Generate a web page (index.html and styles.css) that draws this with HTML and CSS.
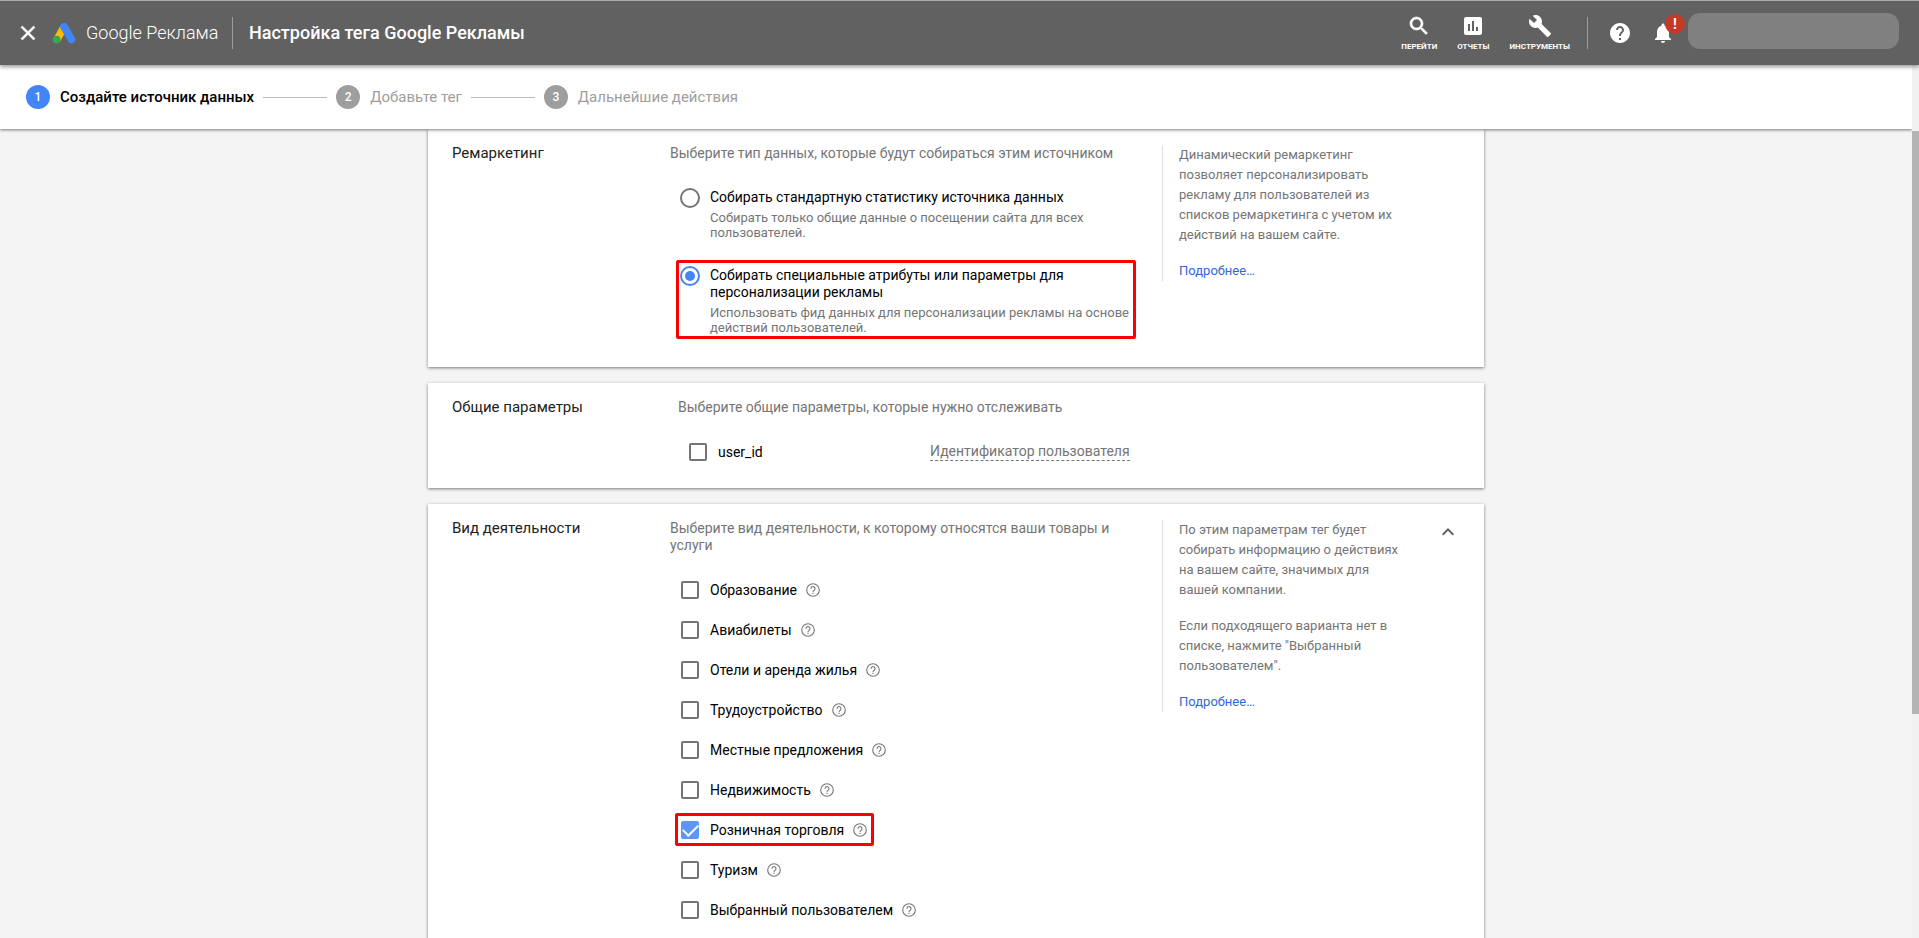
FILE: index.html
```html
<!DOCTYPE html>
<html lang="ru">
<head>
<meta charset="utf-8">
<title>Настройка тега Google Рекламы</title>
<link rel="stylesheet" href="styles.css">
</head>
<body>
<svg class="sprite" aria-hidden="true">
  <symbol id="help-outline" viewBox="0 0 16 16">
    <circle cx="8" cy="8" r="6.300" fill="none" stroke="currentColor" stroke-width="1.100"/>
    <path d="M6 6.700a2 2 0 1 1 3.300 1.400C8.600 8.700 8 9 8 9.900" fill="none" stroke="currentColor" stroke-width="1.100"/>
    <path d="M7.400 10.700h1.200v1.200H7.400z" fill="currentColor"/>
  </symbol>
</svg>

<header class="topbar">
  <button class="icon-btn" aria-label="Закрыть">
    <svg class="icon" viewBox="0 0 24 24"><path d="M19 6.410L17.590 5 12 10.590 6.410 5 5 6.410 10.590 12 5 17.590 6.410 19 12 13.410 17.590 19 19 17.590 13.410 12z" stroke="currentColor" stroke-width=".6"/></svg>
  </button>
  <div class="brand">
    <svg class="brand-logo" viewBox="0 0 24 22" aria-hidden="true">
      <path d="M5 17.500L12 5" stroke="#fbbc04" stroke-width="7.500" fill="none"/>
      <path d="M12 4.800L19.500 17.500" stroke="#4285f4" stroke-width="7.600" stroke-linecap="round" fill="none"/>
      <circle cx="4.600" cy="17.600" r="3.900" fill="#34a853"/>
    </svg>
    <span class="brand-name">Google Реклама</span>
  </div>
  <span class="divider"></span>
  <h1 class="page-title">Настройка тега Google Рекламы</h1>
  <nav class="tools">
    <button class="tool">
      <svg class="icon" viewBox="0 0 24 24"><path d="M15.500 14h-.79l-.28-.27C15.410 12.590 16 11.110 16 9.500 16 5.910 13.090 3 9.500 3S3 5.910 3 9.500 5.910 16 9.500 16c1.610 0 3.090-.59 4.230-1.570l.27.28v.79l5 4.990L20.490 19l-4.990-5zm-6 0C7.010 14 5 11.990 5 9.500S7.010 5 9.500 5 14 7.010 14 9.500 11.990 14 9.500 14z" stroke="currentColor" stroke-width=".6"/></svg>
      <span>ПЕРЕЙТИ</span>
    </button>
    <button class="tool">
      <svg class="icon" viewBox="0 0 24 24"><path d="M19 3H5c-1.100 0-2 .9-2 2v14c0 1.100.9 2 2 2h14c1.100 0 2-.9 2-2V5c0-1.100-.9-2-2-2zM9 17H7v-7h2v7zm4 0h-2V7h2v10zm4 0h-2v-4h2v4z"/></svg>
      <span>ОТЧЕТЫ</span>
    </button>
    <button class="tool">
      <svg class="icon" viewBox="0 0 24 24"><path d="M22.700 19l-9.100-9.100c.9-2.300.4-5-1.500-6.900-2-2-5-2.400-7.400-1.300L9 6 6 9 1.600 4.700C.4 7.100.9 10.100 2.900 12.100c1.900 1.900 4.600 2.400 6.900 1.500l9.100 9.100c.4.4 1 .4 1.400 0l2.300-2.300c.5-.4.5-1.100.1-1.400z"/></svg>
      <span>ИНСТРУМЕНТЫ</span>
    </button>
  </nav>
  <span class="divider"></span>
  <div class="status">
    <button class="icon-btn" aria-label="Справка">
      <svg class="icon" viewBox="0 0 24 24"><path d="M12 2C6.480 2 2 6.480 2 12s4.480 10 10 10 10-4.480 10-10S17.520 2 12 2zm1 17h-2v-2h2v2zm2.070-7.750l-.9.920C13.450 12.900 13 13.500 13 15h-2v-.5c0-1.100.45-2.100 1.170-2.830l1.240-1.260c.37-.36.59-.86.59-1.410 0-1.100-.9-2-2-2s-2 .9-2 2H8c0-2.210 1.790-4 4-4s4 1.790 4 4c0 .88-.36 1.680-.93 2.250z"/></svg>
    </button>
    <button class="icon-btn bell" aria-label="Уведомления">
      <svg class="icon" viewBox="0 0 24 24"><path d="M12 22c1.100 0 2-.9 2-2h-4c0 1.100.89 2 2 2zm6-6v-5c0-3.070-1.640-5.640-4.500-6.320V4c0-.83-.67-1.500-1.500-1.500s-1.500.67-1.500 1.500v.68C7.630 5.360 6 7.920 6 11v5l-2 2v1h16v-1l-2-2z"/></svg>
      <span class="badge">!</span>
    </button>
  </div>
  <div class="account"></div>
</header>

<div class="workspace">
  <div class="content">
    <ol class="steps">
      <li class="step step-active"><span class="step-num">1</span>Создайте источник данных</li>
      <li class="step"><span class="step-num">2</span>Добавьте тег</li>
      <li class="step"><span class="step-num">3</span>Дальнейшие действия</li>
    </ol>

    <main class="cards">
      <section class="card">
        <h2 class="card-title">Ремаркетинг</h2>
        <div class="card-body">
          <p class="lead">Выберите тип данных, которые будут собираться этим источником</p>
          <div class="options">
            <label class="option">
              <input class="radio" type="radio" name="mode">
              <span class="option-text">Собирать стандартную статистику источника данных
                <span class="hint">Собирать только общие данные о посещении сайта для всех пользователей.</span></span>
            </label>
            <label class="option marked">
              <input class="radio" type="radio" name="mode" checked>
              <span class="option-text">Собирать специальные атрибуты или параметры для персонализации рекламы
                <span class="hint">Использовать фид данных для персонализации рекламы на основе действий пользователей.</span></span>
            </label>
          </div>
        </div>
        <aside class="side">
          <p>Динамический ремаркетинг позволяет персонализировать рекламу для пользователей из списков ремаркетинга с учетом их действий на вашем сайте.</p>
          <a href="#">Подробнее…</a>
        </aside>
      </section>

      <section class="card">
        <h2 class="card-title">Общие параметры</h2>
        <div class="card-body param-body">
          <p class="lead">Выберите общие параметры, которые нужно отслеживать</p>
          <div class="param">
            <label class="param-label"><input class="check" type="checkbox">user_id</label>
            <span class="term">Идентификатор пользователя</span>
          </div>
        </div>
      </section>

      <section class="card">
        <h2 class="card-title">Вид деятельности</h2>
        <div class="card-body">
          <p class="lead">Выберите вид деятельности, к которому относятся ваши товары и услуги</p>
          <div class="activities">
            <label class="activity"><input class="check" type="checkbox">Образование<svg class="help"><use href="#help-outline"/></svg></label>
            <label class="activity"><input class="check" type="checkbox">Авиабилеты<svg class="help"><use href="#help-outline"/></svg></label>
            <label class="activity"><input class="check" type="checkbox">Отели и аренда жилья<svg class="help"><use href="#help-outline"/></svg></label>
            <label class="activity"><input class="check" type="checkbox">Трудоустройство<svg class="help"><use href="#help-outline"/></svg></label>
            <label class="activity"><input class="check" type="checkbox">Местные предложения<svg class="help"><use href="#help-outline"/></svg></label>
            <label class="activity"><input class="check" type="checkbox">Недвижимость<svg class="help"><use href="#help-outline"/></svg></label>
            <label class="activity marked"><input class="check" type="checkbox" checked>Розничная торговля<svg class="help"><use href="#help-outline"/></svg></label>
            <label class="activity"><input class="check" type="checkbox">Туризм<svg class="help"><use href="#help-outline"/></svg></label>
            <label class="activity"><input class="check" type="checkbox">Выбранный пользователем<svg class="help"><use href="#help-outline"/></svg></label>
          </div>
        </div>
        <aside class="side">
          <p>По этим параметрам тег будет собирать информацию о действиях на вашем сайте, значимых для вашей компании.</p>
          <p>Если подходящего варианта нет в списке, нажмите "Выбранный пользователем".</p>
          <a href="#">Подробнее…</a>
        </aside>
        <button class="icon-btn collapse" aria-label="Свернуть">
          <svg class="icon" viewBox="0 0 24 24"><path d="M12 8l-6 6 1.410 1.410L12 10.830l4.590 4.580L18 14z"/></svg>
        </button>
      </section>
    </main>
  </div>
  <div class="scrollbar" aria-hidden="true"><span class="thumb"></span></div>
</div>
</body>
</html>
```
FILE: styles.css
```css
* {
  box-sizing: border-box;
}

body {
  margin: 0;
  height: 100vh;
  display: flex;
  flex-direction: column;
  overflow: hidden;
  background: #f4f4f4;
  color: #000;
  font: 14px/17px Roboto, "Noto Sans", sans-serif;
}

h1, h2, p, ol {
  margin: 0;
  padding: 0;
}

button {
  border: 0;
  padding: 0;
  background: none;
  color: inherit;
  font: inherit;
}

.sprite {
  display: none;
}

.icon {
  display: block;
  width: 24px;
  height: 24px;
  fill: currentColor;
}

/* Top bar */

.topbar {
  position: relative;
  z-index: 2;
  display: flex;
  align-items: center;
  flex: none;
  height: 65px;
  padding: 0 20px 0 16px;
  border-top: 1px solid #aaa;
  background: #616161;
  box-shadow: 0 2px 4px rgba(0, 0, 0, .4);
  color: #fff;
}

.icon-btn {
  width: 24px;
  height: 24px;
}

.brand {
  display: flex;
  align-items: center;
  gap: 10px;
  width: 180px;
  margin: 0 0 0 12px;
}

.brand-logo {
  width: 24px;
  height: 22px;
}

.brand-name {
  font-size: 18px;
  line-height: 24px;
  font-weight: 300;
  white-space: nowrap;
}

.divider {
  width: 1px;
  height: 32px;
  background: #9e9e9e;
}

.page-title {
  margin: 0 auto 0 16px;
  font-size: 18px;
  line-height: 24px;
  font-weight: 500;
}

.tools {
  display: flex;
  gap: 20px;
  margin-right: 17px;
}

.tool {
  display: flex;
  flex-direction: column;
  align-items: center;
  gap: 3px;
  font-size: 8px;
  line-height: 12px;
  font-weight: 700;
}

.status {
  display: flex;
  gap: 19px;
  margin: 0 13px 0 20px;
}

.bell {
  position: relative;
}

.badge {
  position: absolute;
  top: -7px;
  left: 14px;
  width: 20px;
  height: 20px;
  border-radius: 50%;
  background: #c53929;
  font-size: 14px;
  line-height: 20px;
  font-weight: 700;
}

.account {
  width: 211px;
  height: 36px;
  margin-bottom: 4px;
  border-radius: 12px;
  background: #808080;
}

/* Work area */

.workspace {
  display: flex;
  flex: 1;
  min-height: 0;
}

.content {
  flex: 1;
  min-width: 0;
  overflow: hidden;
}

.scrollbar {
  display: grid;
  grid-template-rows: 66fr 583fr 224fr;
  width: 7px;
  background: #f1f1f1;
}

.thumb {
  grid-row: 2;
  background: #b4b4b4;
}

/* Stepper */

.steps {
  position: relative;
  z-index: 1;
  display: flex;
  height: 64px;
  padding-left: 26px;
  background: #fff;
  box-shadow: 0 1px 3px rgba(0, 0, 0, .5);
  list-style: none;
}

.step {
  display: flex;
  align-items: center;
  color: #9e9e9e;
  font-size: 15px;
  line-height: 20px;
}

.step:not(:last-child)::after {
  content: "";
  width: 64px;
  height: 1px;
  margin: 0 9px;
  background: #bdbdbd;
}

.step-active {
  color: #000;
  font-weight: 500;
}

.step-num {
  width: 24px;
  height: 24px;
  margin-right: 10px;
  border-radius: 50%;
  background: #9e9e9e;
  color: #fff;
  font-size: 12px;
  line-height: 24px;
  font-weight: 500;
  text-align: center;
}

.step-active .step-num {
  background: #4285f4;
}

/* Cards */

.cards {
  display: flex;
  flex-direction: column;
  gap: 16px;
  max-width: 1056px;
  margin: 0 auto;
}

.card {
  display: grid;
  grid-template-columns: 218px minmax(0, 492px) 240px 1fr;
  align-items: start;
  padding: 16px 24px 27px;
  background: #fff;
  box-shadow: 0 1px 3px rgba(0, 0, 0, .5);
}

.card-title {
  font-size: 15px;
  line-height: 17px;
  font-weight: 400;
  color: #212121;
}

.card-body {
  padding-right: 24px;
}

.lead {
  color: #757575;
}

.side {
  display: grid;
  gap: 16px;
  padding-left: 16px;
  border-left: 1px solid #e0e0e0;
  color: #757575;
  font-size: 13px;
  line-height: 20px;
}

.side a {
  color: #3367d6;
  text-decoration: none;
}

.collapse {
  justify-self: end;
  color: #616161;
}

/* Radio options */

.options {
  display: grid;
  gap: 16px;
  margin: 20px 0 1px 6px;
}

.option {
  display: flex;
  gap: 10px;
  width: 460px;
  max-width: 100%;
  padding: 3px 1px 1px;
  border: 3px solid transparent;
}

.option-text {
  flex: 1;
  padding-top: 1px;
}

.hint {
  display: block;
  margin-top: 4px;
  color: #757575;
  font-size: 13px;
  line-height: 15px;
}

.marked {
  border-color: #f00;
  border-radius: 2px;
}

.radio,
.check {
  appearance: none;
  display: grid;
  place-content: center;
  flex: none;
  margin: 0;
  border: 2px solid #757575;
}

.radio {
  width: 20px;
  height: 20px;
  border-radius: 50%;
}

.radio:checked {
  border-color: #4285f4;
}

.radio:checked::after {
  content: "";
  width: 10px;
  height: 10px;
  border-radius: 50%;
  background: #4285f4;
}

.check {
  width: 18px;
  height: 18px;
  border-radius: 2px;
}

.check:checked {
  border-color: #5b97f6;
  background: #5b97f6;
}

.check:checked::after {
  content: "";
  width: 13px;
  height: 7px;
  margin-bottom: 4px;
  border: solid #fff;
  border-width: 0 0 2px 2px;
  transform: rotate(-45deg);
}

/* Common parameters */

.param-body {
  padding-left: 8px;
}

.param {
  display: flex;
  align-items: center;
  margin: 27px 0 0 11px;
}

.param-label {
  display: flex;
  align-items: center;
  gap: 11px;
  width: 241px;
}

.term {
  border-bottom: 1px dashed #757575;
  color: #757575;
  white-space: nowrap;
}

/* Activities */

.activities {
  display: grid;
  justify-items: start;
  gap: 7px;
  margin: 19px 0 24px 5px;
}

.activity {
  display: flex;
  align-items: center;
  height: 33px;
  padding: 1px 3px 0;
  border: 3px solid transparent;
}

.activity.marked {
  border-color: #f00;
}

.activity .check {
  margin-right: 11px;
}

.help {
  width: 16px;
  height: 16px;
  margin-left: 8px;
  color: #757575;
}
```
